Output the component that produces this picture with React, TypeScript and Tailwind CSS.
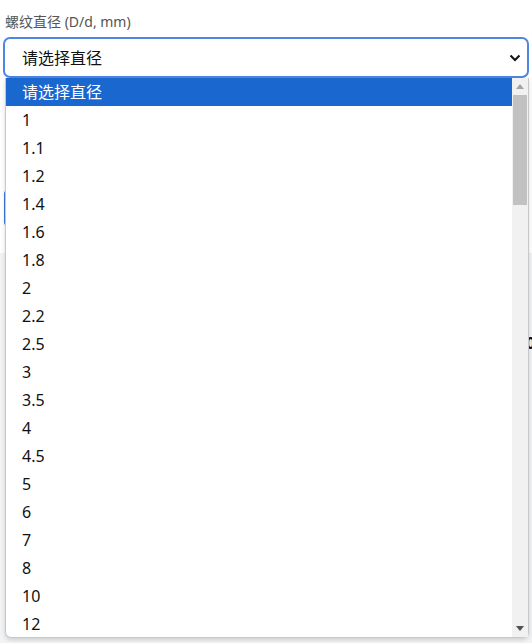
import React from "react";

const items = ["请选择直径", "1", "1.1", "1.2", "1.4", "1.6", "1.8", "2", "2.2", "2.5", "3", "3.5", "4", "4.5", "5", "6", "7", "8", "10", "12"];

export default function App() {
  return (
    <div
      className="relative w-[532px] h-[643px] overflow-hidden bg-white"
      style={{ fontFamily: '"Noto Sans", "Noto Sans CJK SC", sans-serif' }}
    >
      {/* background page content */}
      <div className="h-[253px] bg-white px-[3px] pt-[12px]">
        <div className="pl-[2px] text-[14px] leading-[20px] text-[#555]">螺纹直径 (D/d, mm)</div>
        <div className="mt-[5px] flex h-[41px] items-center justify-between rounded-[7px] border-2 border-[#4f86e0] bg-white pl-[17px] pr-[6px]">
          <span className="text-[16px] text-[#111]">请选择直径</span>
          <svg width="12" height="8" viewBox="0 0 12 8" className="mt-[1px]">
            <path d="M1.5 1.5 L6 6 L10.5 1.5" fill="none" stroke="#111" strokeWidth="2" />
          </svg>
        </div>
        <div className="mt-[112px] ml-[1px] h-[36px] w-[40px] rounded-l-[4px] border-l-2 border-[#3b76d8]" />
      </div>
      <div className="h-[390px] bg-[#f2f3f5] pt-[78px]">
        <div className="ml-[526px] text-[16px] font-bold leading-[24px] text-[#111]">0</div>
      </div>

      {/* open dropdown list */}
      <div className="absolute left-[5px] top-[78px] flex h-[560px] w-[524px] rounded-b-[6px] border border-t-0 border-[#c8c8c8] bg-white shadow-[0_2px_4px_rgba(0,0,0,0.15)]">
        <div className="flex-1">
          {items.map((it, i) => (
            <div
              key={it}
              className={
                "flex h-[28px] items-center pl-[16px] text-[16px] " +
                (i === 0 ? "bg-[#1a67d0] text-white" : "text-[#111]")
              }
            >
              {it}
            </div>
          ))}
        </div>
        <div className="flex w-[16px] flex-col bg-[#f1f1f1]">
          <div className="flex h-[17px] items-center justify-center">
            <svg width="8" height="5" viewBox="0 0 8 5">
              <path d="M0 5 L4 0 L8 5 Z" fill="#a3a3a3" />
            </svg>
          </div>
          <div className="mx-[1px] h-[110px] bg-[#c1c1c1]" />
          <div className="flex-1" />
          <div className="flex h-[17px] items-center justify-center">
            <svg width="8" height="5" viewBox="0 0 8 5">
              <path d="M0 0 L8 0 L4 5 Z" fill="#505050" />
            </svg>
          </div>
        </div>
      </div>
    </div>
  );
}
